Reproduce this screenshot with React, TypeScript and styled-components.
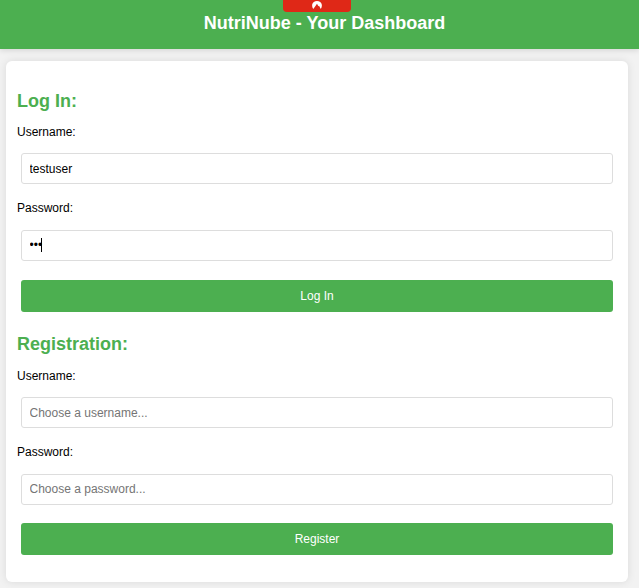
import React from "react";
import styled, { createGlobalStyle } from "styled-components";

const GlobalStyle = createGlobalStyle`
  * { box-sizing: border-box; }
  html { background: #f2f2f2; }
  body {
    margin: 0;
    height: 588px;
    overflow: hidden;
    background: #f2f2f2;
    color: #000;
    font-family: "Liberation Sans", Arial, sans-serif;
    font-size: 12px;
  }
`;

const Header = styled.header`
  position: relative;
  height: 49px;
  padding: 13px 0 0 10px;
  background: #4caf50;
  box-shadow: 0 2px 5px rgba(0, 0, 0, 0.1);
  color: #fff;
  text-align: center;
`;

const Title = styled.h1`
  margin: 0;
  font-size: 18px;
  line-height: 21px;
`;

const AlertTab = styled.div`
  position: absolute;
  top: 0;
  left: 283px;
  width: 68px;
  height: 12px;
  border-radius: 0 0 4px 4px;
  background: #df2817;
`;

const TabIcon = styled.svg`
  display: block;
  margin: 1px 0 0 29px;
`;

const Card = styled.main`
  width: 622px;
  height: 521px;
  margin: 12px 0 0 6px;
  padding: 30px 15px 0 11px;
  border-radius: 6px;
  background: #fff;
  box-shadow: 0 0 8px rgba(0, 0, 0, 0.1);
`;

const Form = styled.form<{ $last?: boolean }>`
  display: flex;
  flex-direction: column;
  height: ${(p) => (p.$last ? "auto" : "243px")};
`;

const Heading = styled.h2<{ $gap?: number }>`
  margin: 0 0 ${(p) => p.$gap ?? 13}px;
  color: #4caf50;
  font-size: 18px;
  line-height: 21px;
`;

const Field = styled.div<{ $gap: number }>`
  display: flex;
  flex-direction: column;
  margin-bottom: ${(p) => p.$gap}px;
`;

const Label = styled.label<{ $gap?: number }>`
  height: 14px;
  margin-bottom: ${(p) => p.$gap ?? 15}px;
  line-height: 14px;
`;

const InputWrap = styled.div`
  position: relative;
  height: 31px;
  margin-left: 4px;
`;

const Input = styled.input`
  display: block;
  width: 100%;
  height: 31px;
  padding: 0 7.5px;
  border: 1px solid #ddd;
  border-radius: 3px;
  outline: none;
  background: #fff;
  color: #000;
  font: 12px "Liberation Sans", Arial, sans-serif;
  &::placeholder { color: #757575; }
  &[type="password"] { padding-bottom: 2px; }
`;

const Caret = styled.span`
  position: absolute;
  top: 8px;
  left: 20px;
  width: 1px;
  height: 14px;
  background: #000;
`;

const Button = styled.button`
  height: 32px;
  margin: 0 0 0 4px;
  padding: 0;
  border: 0;
  border-radius: 3px;
  background: #4caf50;
  color: #fff;
  font: 12px "Liberation Sans", Arial, sans-serif;
`;

export default function App() {
  return (
    <>
      <GlobalStyle />
      <Header>
        <Title>NutriNube - Your Dashboard</Title>
        <AlertTab>
          <TabIcon width="10" height="9" viewBox="0 0 10 9">
            <path
              d="M1.2 8C-.6 5.2 0 2.4 1.8 1C3.6-.3 6.4-.3 8.2 1C10 2.4 10.6 5.2 8.8 8L7 4.8L6.4 5.3L5 2.8L2.4 6.6Z"
              fill="#fff"
            />
          </TabIcon>
        </AlertTab>
      </Header>
      <Card>
        <Form>
          <Heading>Log In:</Heading>
          <Field $gap={17}>
            <Label htmlFor="login-user" $gap={14}>Username:</Label>
            <InputWrap>
              <Input id="login-user" defaultValue="testuser" />
            </InputWrap>
          </Field>
          <Field $gap={19}>
            <Label htmlFor="login-pass">Password:</Label>
            <InputWrap>
              <Input id="login-pass" type="password" defaultValue="abc" />
              <Caret />
            </InputWrap>
          </Field>
          <Button type="button">Log In</Button>
        </Form>
        <Form $last>
          <Heading $gap={14}>Registration:</Heading>
          <Field $gap={17}>
            <Label htmlFor="reg-user" $gap={14}>Username:</Label>
            <InputWrap>
              <Input id="reg-user" placeholder="Choose a username..." />
            </InputWrap>
          </Field>
          <Field $gap={18}>
            <Label htmlFor="reg-pass">Password:</Label>
            <InputWrap>
              <Input id="reg-pass" type="password" placeholder="Choose a password..." />
            </InputWrap>
          </Field>
          <Button type="button">Register</Button>
        </Form>
      </Card>
    </>
  );
}
